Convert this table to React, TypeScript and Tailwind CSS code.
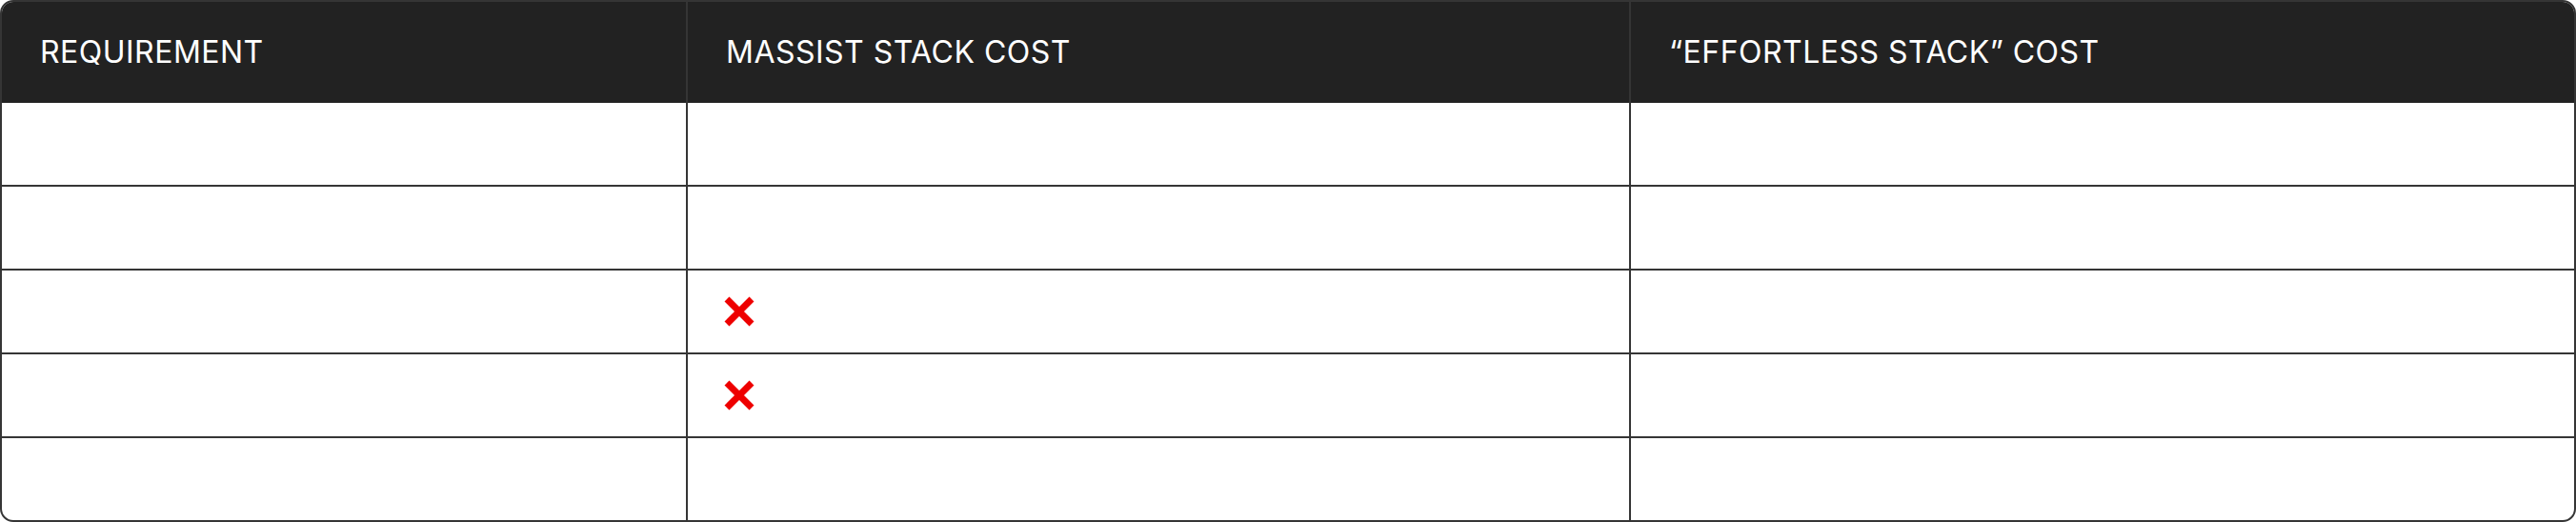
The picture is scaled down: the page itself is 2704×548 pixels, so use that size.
import React from "react";

const XIcon = () => (
  <svg width="32" height="32" viewBox="0 0 32 32" className="block">
    <path d="M3 3 L29 29 M29 3 L3 29" stroke="#ee0000" strokeWidth="7" strokeLinecap="butt" fill="none" />
  </svg>
);

const rows: [boolean, boolean][] = [
  [false, false],
  [false, false],
  [true, false],
  [true, false],
  [false, false],
];

export default function App() {
  return (
    <div className="w-[2704px] h-[548px] bg-white" style={{ fontFamily: "Inter, 'Noto Sans', sans-serif" }}>
      <div className="w-full h-full border-2 border-[#353535] rounded-[14px] overflow-hidden flex flex-col">
        <div className="flex h-[106px] bg-[#222222] text-white text-[32px] tracking-[0.015em] leading-none">
          <div className="w-[720px] shrink-0 border-r-2 border-[#353535] flex items-center pl-[40px]">REQUIREMENT</div>
          <div className="w-[990px] shrink-0 border-r-2 border-[#353535] flex items-center pl-[40px]">MASSIST STACK COST</div>
          <div className="flex-1 flex items-center pl-[40px]">“EFFORTLESS STACK” COST</div>
        </div>
        {rows.map((r, i) => (
          <div
            key={i}
            className={
              i < rows.length - 1
                ? "flex h-[88px] border-b-2 border-[#353535]"
                : "flex h-[86px]"
            }
          >
            <div className="w-[720px] shrink-0 border-r-2 border-[#353535]"></div>
            <div className="w-[990px] shrink-0 border-r-2 border-[#353535] flex items-center pl-[38px]">
              {r[0] ? <XIcon /> : null}
            </div>
            <div className="flex-1"></div>
          </div>
        ))}
      </div>
    </div>
  );
}
